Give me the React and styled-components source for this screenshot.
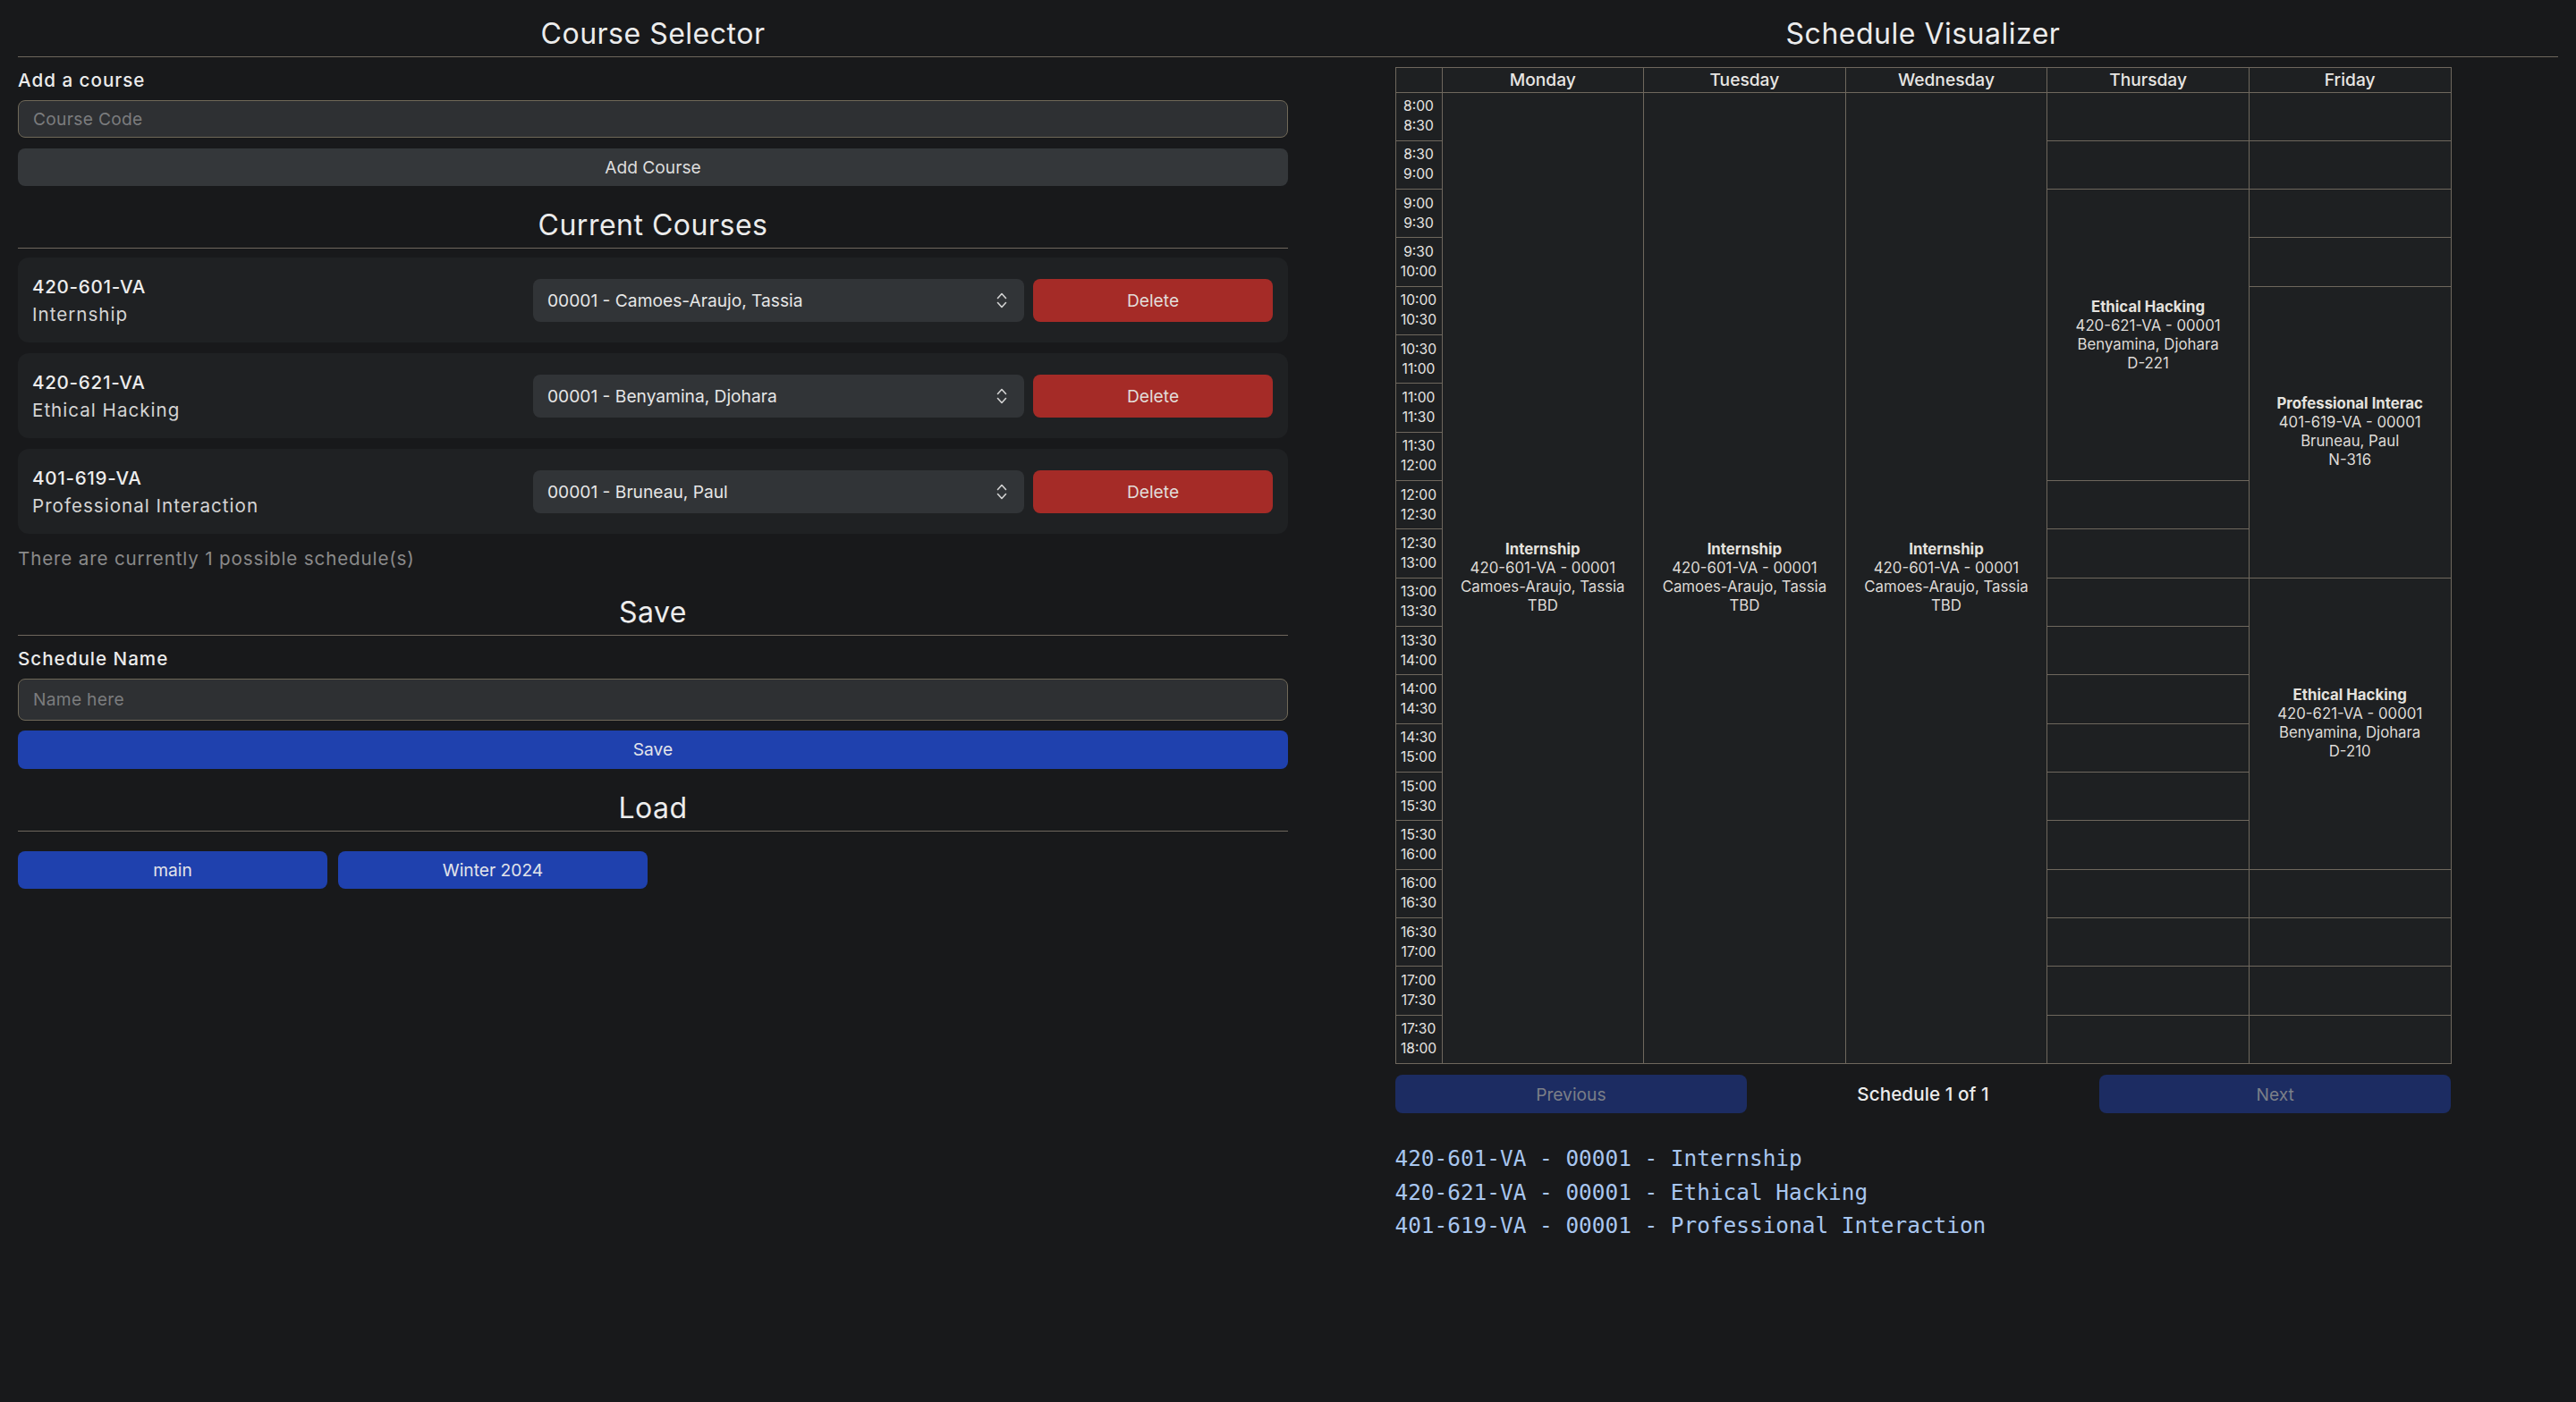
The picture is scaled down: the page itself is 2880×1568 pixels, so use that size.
import React from 'react';
import styled, { createGlobalStyle } from 'styled-components';

const GlobalStyle = createGlobalStyle`
  html, body { margin: 0; padding: 0; background: #18191b; }
  body {
    font-family: Inter, "Open Sans", sans-serif;
    color: #e8e6e3;
    font-size: 20.6px;
  }
  * { box-sizing: border-box; }
`;

const Page = styled.div`
  display: grid;
  grid-template-columns: 1fr 1fr;
  padding: 17.5px 20px 40px;
  min-height: 1568px;
`;

const Column = styled.section`
  display: flex;
  flex-direction: column;
  min-width: 0;
`;

const Heading = styled.h2`
  margin: ${(p) => (p.$first ? '0' : '24.5px')} 0 0;
  padding-bottom: 5px;
  font-size: 32px;
  font-weight: 400;
  line-height: 40px;
  letter-spacing: 0.5px;
  text-align: center;
  color: #ececec;
  border-bottom: 1px solid #6e675d;
`;

const Label = styled.label`
  margin-top: 11px;
  font-weight: 500;
  line-height: 30px;
  letter-spacing: 1px;
  color: #ebebeb;
`;

const TextInput = styled.input`
  margin-top: 7px;
  height: ${(p) => p.$h}px;
  width: 100%;
  padding: 0 16px;
  background: #2e3033;
  border: 1px solid #6f6858;
  border-radius: 8px;
  color: #e8e6e3;
  font-family: inherit;
  font-size: 19.2px;
  letter-spacing: 0.3px;
  outline: none;
  &::placeholder { color: #7b7c7e; }
`;

const Button = styled.button`
  margin-top: ${(p) => p.$mt ?? 0}px;
  height: ${(p) => p.$h ?? 42}px;
  width: 100%;
  border: none;
  border-radius: 8px;
  background: ${(p) => p.$bg};
  color: ${(p) => p.$fg ?? '#e4e4e4'};
  font-family: inherit;
  font-size: 19.2px;
  cursor: pointer;
`;

const CardList = styled.div`
  margin-top: 10px;
  display: flex;
  flex-direction: column;
  gap: 12px;
`;

const Card = styled.div`
  display: grid;
  grid-template-columns: 1fr 549px 268px;
  gap: 10px;
  align-items: center;
  padding: 16.5px 17px 16.5px 16px;
  background: #1f2123;
  border-radius: 12px;
`;

const CourseInfo = styled.div`
  display: flex;
  flex-direction: column;
  line-height: 31px;
  letter-spacing: 1px;
`;

const CourseCode = styled.span`
  font-weight: 500;
  letter-spacing: 0.7px;
  color: #ededed;
`;

const CourseName = styled.span`
  color: #d4d4d4;
`;

const SelectWrap = styled.div`
  position: relative;
  height: 48px;
`;

const Select = styled.select`
  appearance: none;
  width: 100%;
  height: 100%;
  padding: 0 40px 0 16px;
  background: #313437;
  border: none;
  border-radius: 8px;
  color: #e6e6e6;
  font-family: inherit;
  font-size: 19.2px;
  outline: none;
`;

const Chevrons = styled.svg`
  position: absolute;
  right: 19px;
  top: 50%;
  transform: translateY(-50%);
  pointer-events: none;
`;

const DeleteButton = styled.button`
  height: 48px;
  border: none;
  border-radius: 8px;
  background: #a52b27;
  color: #e2ddd9;
  font-family: inherit;
  font-size: 19.2px;
  cursor: pointer;
`;

const Note = styled.p`
  margin: 13px 0 0;
  line-height: 30px;
  letter-spacing: 0.85px;
  color: #8a8a8a;
`;

const LoadGrid = styled.div`
  margin-top: 22px;
  display: grid;
  grid-template-columns: repeat(4, 1fr);
  gap: 12px;
`;

const Visualizer = styled.div`
  width: 1181px;
  align-self: center;
  margin-top: 11px;
  display: flex;
  flex-direction: column;
`;

const Table = styled.table`
  width: 100%;
  border-collapse: collapse;
  table-layout: fixed;
  background: #1e2022;
  border: 1px solid #6e675d;
`;

const HeadCell = styled.th`
  height: 28px;
  padding: 0;
  font-weight: 500;
  font-size: 19.2px;
  line-height: 26px;
  color: #e8e6e3;
  border: 1px solid #6e675d;
  width: ${(p) => (p.$time ? '52px' : 'auto')};
`;

const Row = styled.tr`
  height: 54.33px;
`;

const TimeCell = styled.td`
  padding: 0;
  text-align: center;
  vertical-align: middle;
  font-size: 15.6px;
  line-height: 22px;
  color: #e6e4e1;
  border: 1px solid #6e675d;
`;

const DayCell = styled.td`
  padding: 0 4px;
  text-align: center;
  vertical-align: middle;
  border: 1px solid #6e675d;
  font-size: 16.8px;
  line-height: 21px;
  color: #dedbd7;
`;

const EventTitle = styled.div`
  font-weight: 700;
  color: #e4e2de;
`;

const Pager = styled.div`
  margin-top: 12px;
  display: grid;
  grid-template-columns: repeat(3, 1fr);
  align-items: center;
`;

const PagerLabel = styled.span`
  text-align: center;
  font-weight: 500;
  letter-spacing: 0.1px;
  color: #ececec;
`;

const MonoList = styled.div`
  margin-top: 32px;
  display: flex;
  flex-direction: column;
  font-family: "DejaVu Sans Mono", "Liberation Mono", monospace;
  font-size: 24.4px;
  line-height: 37.5px;
  color: #a8c6ef;
`;

const courses = [
  { code: '420-601-VA', name: 'Internship', section: '00001 - Camoes-Araujo, Tassia' },
  { code: '420-621-VA', name: 'Ethical Hacking', section: '00001 - Benyamina, Djohara' },
  { code: '401-619-VA', name: 'Professional Interaction', section: '00001 - Bruneau, Paul' },
];

const days = ['Monday', 'Tuesday', 'Wednesday', 'Thursday', 'Friday'];

const internship = { title: 'Internship', code: '420-601-VA - 00001', teacher: 'Camoes-Araujo, Tassia', room: 'TBD' };

const schedule = [
  [{ start: 0, span: 20, ...internship }],
  [{ start: 0, span: 20, ...internship }],
  [{ start: 0, span: 20, ...internship }],
  [{ start: 2, span: 6, title: 'Ethical Hacking', code: '420-621-VA - 00001', teacher: 'Benyamina, Djohara', room: 'D-221' }],
  [
    { start: 4, span: 6, title: 'Professional Interaction', code: '401-619-VA - 00001', teacher: 'Bruneau, Paul', room: 'N-316' },
    { start: 10, span: 6, title: 'Ethical Hacking', code: '420-621-VA - 00001', teacher: 'Benyamina, Djohara', room: 'D-210' },
  ],
];

const fmt = (m) => `${Math.floor(m / 60)}:${String(m % 60).padStart(2, '0')}`;
const slots = Array.from({ length: 20 }, (_, i) => [fmt(480 + 30 * i), fmt(510 + 30 * i)]);

function ChevronIcon() {
  return (
    <Chevrons width="12" height="18" viewBox="0 0 12 18" fill="none" stroke="#d2d2d2" strokeWidth="1.6" strokeLinecap="round" strokeLinejoin="round">
      <path d="M1.5 6.5 L6 1.5 L10.5 6.5" />
      <path d="M1.5 11.5 L6 16.5 L10.5 11.5" />
    </Chevrons>
  );
}

function ScheduleTable() {
  return (
    <Table>
      <thead>
        <tr>
          <HeadCell $time />
          {days.map((d) => (
            <HeadCell key={d}>{d}</HeadCell>
          ))}
        </tr>
      </thead>
      <tbody>
        {slots.map(([a, b], i) => (
          <Row key={a}>
            <TimeCell>
              {a}
              <br />
              {b}
            </TimeCell>
            {schedule.map((events, d) => {
              const ev = events.find((e) => e.start === i);
              if (ev) {
                return (
                  <DayCell key={d} rowSpan={ev.span}>
                    <EventTitle>{ev.title.slice(0, 20)}</EventTitle>
                    <div>{ev.code}</div>
                    <div>{ev.teacher}</div>
                    <div>{ev.room}</div>
                  </DayCell>
                );
              }
              const covered = events.some((e) => i > e.start && i < e.start + e.span);
              if (covered) return null;
              return <DayCell key={d} />;
            })}
          </Row>
        ))}
      </tbody>
    </Table>
  );
}

export default function App() {
  return (
    <>
      <GlobalStyle />
      <Page>
        <Column>
          <Heading $first>Course Selector</Heading>
          <Label>Add a course</Label>
          <TextInput $h={42} placeholder="Course Code" />
          <Button $mt={12} $h={42} $bg="#34373a" $fg="#dcdcdc">Add Course</Button>

          <Heading>Current Courses</Heading>
          <CardList>
            {courses.map((c) => (
              <Card key={c.code}>
                <CourseInfo>
                  <CourseCode>{c.code}</CourseCode>
                  <CourseName>{c.name}</CourseName>
                </CourseInfo>
                <SelectWrap>
                  <Select defaultValue={c.section}>
                    <option>{c.section}</option>
                  </Select>
                  <ChevronIcon />
                </SelectWrap>
                <DeleteButton>Delete</DeleteButton>
              </Card>
            ))}
          </CardList>
          <Note>There are currently 1 possible schedule(s)</Note>

          <Heading>Save</Heading>
          <Label>Schedule Name</Label>
          <TextInput $h={47} placeholder="Name here" />
          <Button $mt={11} $h={43} $bg="#1f41ae" $fg="#e2e4ea">Save</Button>

          <Heading>Load</Heading>
          <LoadGrid>
            <Button $h={42} $bg="#1f41ae" $fg="#e2e4ea">main</Button>
            <Button $h={42} $bg="#1f41ae" $fg="#e2e4ea">Winter 2024</Button>
          </LoadGrid>
        </Column>

        <Column>
          <Heading $first>Schedule Visualizer</Heading>
          <Visualizer>
            <ScheduleTable />
            <Pager>
              <Button $h={43} $bg="#1c2c62" $fg="#7b7f88" disabled>Previous</Button>
              <PagerLabel>Schedule 1 of 1</PagerLabel>
              <Button $h={43} $bg="#1c2c62" $fg="#7b7f88" disabled>Next</Button>
            </Pager>
            <MonoList>
              <span>420-601-VA - 00001 - Internship</span>
              <span>420-621-VA - 00001 - Ethical Hacking</span>
              <span>401-619-VA - 00001 - Professional Interaction</span>
            </MonoList>
          </Visualizer>
        </Column>
      </Page>
    </>
  );
}
